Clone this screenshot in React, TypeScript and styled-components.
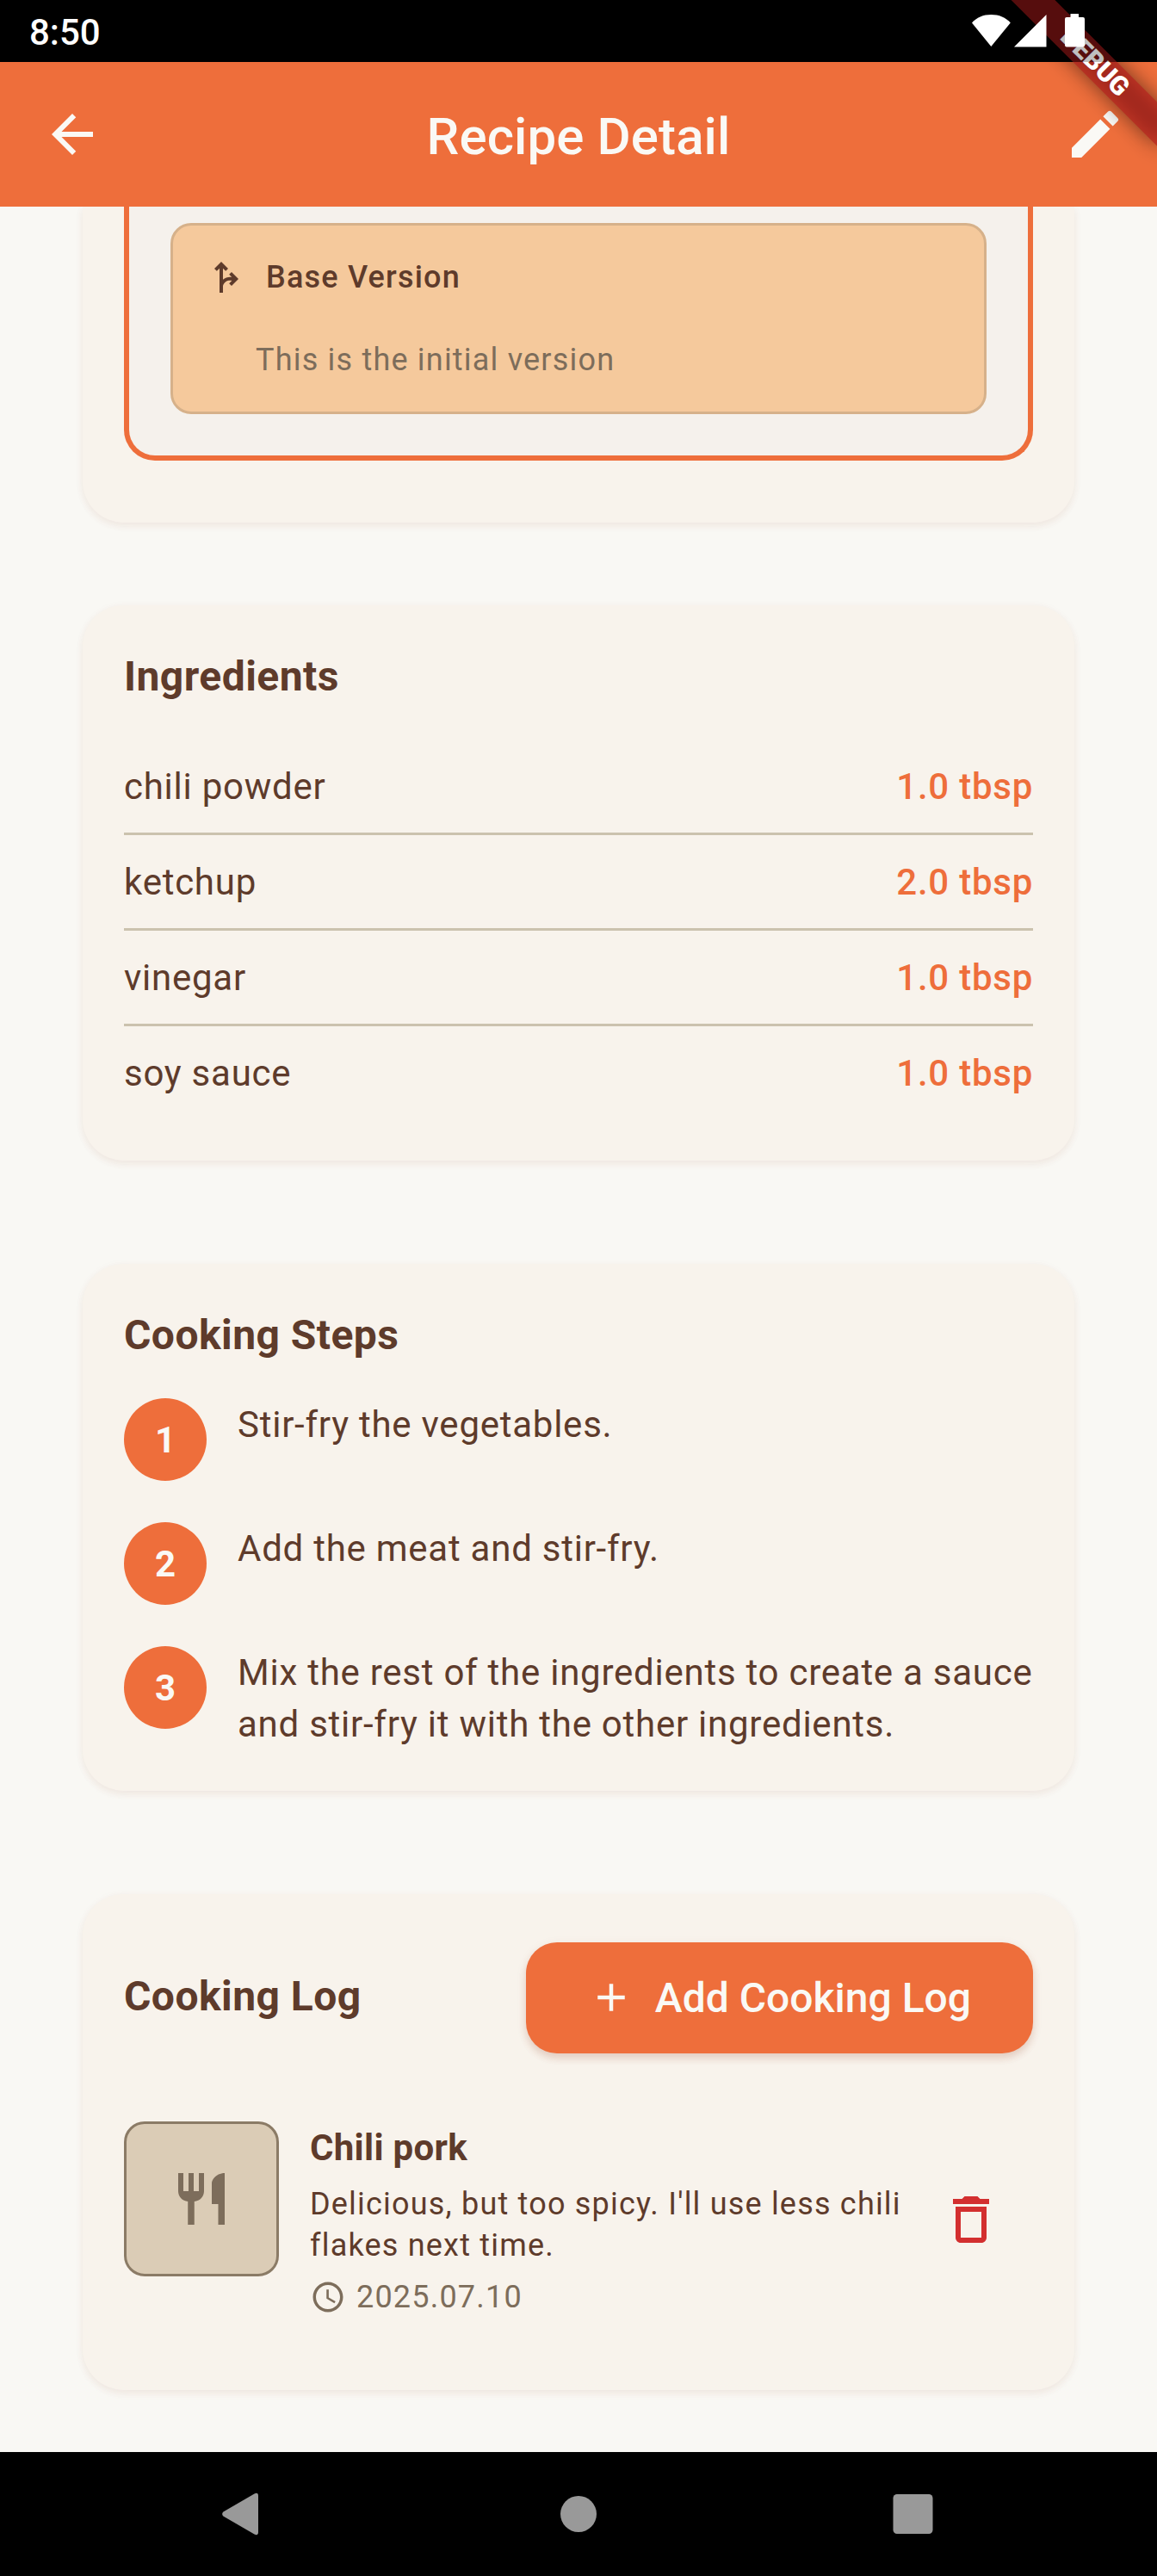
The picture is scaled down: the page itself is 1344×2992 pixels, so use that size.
import React from "react";
import styled, { createGlobalStyle } from "styled-components";
import {
  MdAccessTime,
  MdAdd,
  MdArrowBack,
  MdDeleteOutline,
  MdEdit,
  MdForkRight,
  MdRestaurant,
} from "react-icons/md";

const color = {
  primary: "#ee6e3b",
  onPrimary: "#faf9f5",
  page: "#f9f8f4",
  card: "#f8f3ec",
  panel: "#f5f1ec",
  version: "#f5c99c",
  versionBorder: "#d6b18a",
  text: "#5e3b2b",
  muted: "#7d6d5b",
  divider: "#cbc2ae",
  thumb: "#dbccb6",
  thumbBorder: "#8b7b66",
  danger: "#d32f2f",
};

const GlobalStyle = createGlobalStyle`
  *, *::before, *::after { box-sizing: border-box; }
  body { margin: 0; background: ${color.page}; }
  h1, h2, h3, p, ul, ol { margin: 0; padding: 0; font-weight: inherit; font-size: inherit; }
  ul, ol { list-style: none; }
  button { border: 0; padding: 0; background: none; font: inherit; color: inherit; }
  svg { display: block; flex: none; }
`;

const Screen = styled.div`
  position: relative;
  display: flex;
  flex-direction: column;
  width: 1344px;
  height: 2992px;
  overflow: hidden;
  background: ${color.page};
  color: ${color.text};
  font-family: Roboto, "Liberation Sans", sans-serif;
`;

const StatusBackdrop = styled.div`
  flex: none;
  height: 72px;
  background: #000;
`;

const StatusBar = styled.div`
  position: absolute;
  inset: 0 0 auto 0;
  z-index: 3;
  display: flex;
  justify-content: space-between;
  align-items: center;
  height: 72px;
  padding: 0 84px 0 34px;
  background: rgba(0, 0, 0, 0.25);
  color: #fff;
`;

const Clock = styled.span`
  font-size: 42px;
  line-height: 48px;
  font-weight: 500;
  padding-top: 3px;
`;

const StatusIcons = styled.div`
  display: flex;
  align-items: center;
`;

const AppBar = styled.header`
  flex: none;
  display: grid;
  grid-template-columns: 168px 1fr 168px;
  align-items: center;
  height: 168px;
  background: ${color.primary};
  color: ${color.onPrimary};
`;

const BarButton = styled.button<{ $end?: boolean }>`
  display: flex;
  align-items: center;
  justify-content: ${(p) => (p.$end ? "flex-end" : "flex-start")};
  height: 144px;
  padding: 0 ${(p) => (p.$end ? 36 : 48)}px;
  font-size: 72px;
`;

const BarTitle = styled.h1`
  padding-top: 6px;
  text-align: center;
  font-size: 60px;
  line-height: 84px;
  font-weight: 500;
  letter-spacing: 0.1px;
`;

const BannerArea = styled.div`
  position: absolute;
  top: 0;
  right: 0;
  z-index: 2;
  width: 300px;
  height: 300px;
  overflow: hidden;
  pointer-events: none;
`;

const bannerBox = `
  position: absolute;
  top: 54px;
  right: -48px;
  width: 240px;
  height: 36px;
  transform: rotate(45deg);
`;

const BannerShadow = styled.div`
  ${bannerBox}
  background: rgba(0, 0, 0, 0.5);
  filter: blur(12px);
`;

const BannerRibbon = styled.div`
  ${bannerBox}
  background: rgba(183, 28, 28, 0.627);
  color: #fff;
  font-size: 30.6px;
  line-height: 36px;
  font-weight: 900;
  text-align: center;
`;

const Content = styled.main`
  flex: 1;
  display: flex;
  flex-direction: column;
  padding: 0 96px;
  overflow: hidden;
`;

const Card = styled.section<{ $gap?: number; $continued?: boolean }>`
  flex: none;
  margin-top: ${(p) => p.$gap ?? 0}px;
  padding: ${(p) => (p.$continued ? 0 : 48)}px 48px 48px;
  border-radius: ${(p) => (p.$continued ? "0 0 48px 48px" : "48px")};
  background: ${color.card};
  box-shadow: 0 4px 9px rgba(150, 80, 60, 0.07), 0 2px 12px rgba(150, 80, 60, 0.04);
`;

const VersionPanel = styled.div`
  margin-bottom: 24px;
  padding: 19px 48px 48px;
  border: 6px solid ${color.primary};
  border-top: 0;
  border-radius: 0 0 36px 36px;
  background: ${color.panel};
`;

const VersionItem = styled.article`
  display: flex;
  flex-direction: column;
  gap: 48px;
  padding: 36px;
  border: 3px solid ${color.versionBorder};
  border-radius: 24px;
  background: ${color.version};
  font-size: 36px;
  line-height: 48px;
`;

const VersionName = styled.h3`
  display: flex;
  align-items: center;
  gap: 24px;
  font-weight: 500;
  letter-spacing: 1.2px;

  svg {
    font-size: 48px;
  }
`;

const VersionNote = styled.p`
  padding-left: 60px;
  letter-spacing: 1.2px;
  color: ${color.muted};
`;

const SectionTitle = styled.h2`
  font-size: 48px;
  line-height: 69px;
  font-weight: 700;
  letter-spacing: 0.45px;
`;

const IngredientList = styled.ul`
  margin-top: 39px;
`;

const Ingredient = styled.li`
  display: flex;
  justify-content: space-between;
  padding: 25px 0 23px;
  font-size: 42px;
  line-height: 60px;
  letter-spacing: 0.75px;

  & + & {
    border-top: 3px solid ${color.divider};
  }
`;

const Amount = styled.span`
  color: ${color.primary};
  font-weight: 500;
`;

const StepList = styled.ol`
  display: flex;
  flex-direction: column;
  gap: 48px;
  margin-top: 39px;
`;

const Step = styled.li`
  display: flex;
  align-items: flex-start;
  gap: 36px;
`;

const StepNumber = styled.span`
  flex: none;
  display: flex;
  align-items: center;
  justify-content: center;
  width: 96px;
  height: 96px;
  padding-top: 1px;
  border-radius: 50%;
  background: ${color.primary};
  color: ${color.onPrimary};
  font-size: 42px;
  line-height: 60px;
  font-weight: 700;
`;

const StepText = styled.p`
  flex: 1;
  margin: 1px -4px -1px 0;
  font-size: 42px;
  line-height: 60px;
  letter-spacing: 0.75px;
`;

const LogHeader = styled.div`
  display: flex;
  align-items: center;
  justify-content: space-between;
  height: 144px;

  ${SectionTitle} {
    margin-bottom: 3px;
  }
`;

const AddButton = styled.button`
  display: flex;
  align-items: center;
  gap: 24px;
  height: 129px;
  padding: 0 72px;
  border-radius: 36px;
  background: ${color.primary};
  color: ${color.onPrimary};
  font-size: 48px;
  font-weight: 500;
  box-shadow: 0 6px 8px rgba(160, 80, 50, 0.16), 0 3px 12px rgba(160, 80, 50, 0.1);

  svg {
    font-size: 54px;
  }
`;

const LogEntry = styled.article`
  display: flex;
  align-items: flex-start;
  gap: 36px;
  margin: 72px 0 36px;
`;

const Thumb = styled.div`
  flex: none;
  display: flex;
  align-items: center;
  justify-content: center;
  width: 180px;
  height: 180px;
  border: 3px solid ${color.thumbBorder};
  border-radius: 24px;
  background: ${color.thumb};
  color: ${color.muted};
  font-size: 72px;
`;

const LogBody = styled.div`
  flex: 1;
  display: flex;
  flex-direction: column;
  gap: 12px;
  margin-right: -36px;
  font-size: 36px;
  line-height: 48px;
  letter-spacing: 1.2px;
`;

const LogTitle = styled.h3`
  padding-top: 1px;
  font-size: 42px;
  line-height: 59px;
  font-weight: 700;
  letter-spacing: 0.3px;
`;

const LogDate = styled.p`
  display: flex;
  align-items: center;
  gap: 12px;
  color: ${color.muted};

  svg {
    font-size: 42px;
  }
`;

const DeleteButton = styled.button`
  align-self: center;
  display: flex;
  align-items: center;
  justify-content: center;
  width: 144px;
  height: 144px;
  color: ${color.danger};
  font-size: 72px;
`;

const NavBar = styled.nav`
  flex: none;
  display: grid;
  grid-template-columns: 84px 84px 84px;
  justify-content: center;
  align-items: center;
  column-gap: 306px;
  height: 144px;
  background: #000;
  color: #999;
`;

const NavButton = styled.button`
  display: flex;
  justify-content: center;
`;

const ingredients = [
  { name: "chili powder", amount: "1.0 tbsp" },
  { name: "ketchup", amount: "2.0 tbsp" },
  { name: "vinegar", amount: "1.0 tbsp" },
  { name: "soy sauce", amount: "1.0 tbsp" },
];

const steps = [
  "Stir-fry the vegetables.",
  "Add the meat and stir-fry.",
  "Mix the rest of the ingredients to create a sauce and stir-fry it with the other ingredients.",
];

function SystemIcons() {
  return (
    <StatusIcons>
      <svg width="132" height="40" viewBox="0 0 132 40" fill="#fff">
        <path d="M1 10.500C6.500 4.300 14 1 23.300 1s17 3.300 22.500 9.500L23.300 38z" />
        <path d="M87.500 1v37.500H50z" />
        <path d="M115.500 0h9.500v4h5a2 2 0 0 1 2 2v30.500a2 2 0 0 1-2 2h-19a2 2 0 0 1-2-2V6a2 2 0 0 1 2-2h4.500z" />
      </svg>
    </StatusIcons>
  );
}

export default function App() {
  return (
    <Screen>
      <GlobalStyle />
      <StatusBackdrop />
      <AppBar>
        <BarButton aria-label="Back">
          <MdArrowBack />
        </BarButton>
        <BarTitle>Recipe Detail</BarTitle>
        <BarButton $end aria-label="Edit">
          <MdEdit />
        </BarButton>
      </AppBar>

      <Content>
        <Card $continued>
          <VersionPanel>
            <VersionItem>
              <VersionName>
                <MdForkRight />
                Base Version
              </VersionName>
              <VersionNote>This is the initial version</VersionNote>
            </VersionItem>
          </VersionPanel>
        </Card>

        <Card $gap={96}>
          <SectionTitle>Ingredients</SectionTitle>
          <IngredientList>
            {ingredients.map((item) => (
              <Ingredient key={item.name}>
                <span>{item.name}</span>
                <Amount>{item.amount}</Amount>
              </Ingredient>
            ))}
          </IngredientList>
        </Card>

        <Card $gap={120}>
          <SectionTitle>Cooking Steps</SectionTitle>
          <StepList>
            {steps.map((step, index) => (
              <Step key={step}>
                <StepNumber>{index + 1}</StepNumber>
                <StepText>{step}</StepText>
              </Step>
            ))}
          </StepList>
        </Card>

        <Card $gap={120}>
          <LogHeader>
            <SectionTitle>Cooking Log</SectionTitle>
            <AddButton>
              <MdAdd />
              Add Cooking Log
            </AddButton>
          </LogHeader>
          <LogEntry>
            <Thumb>
              <MdRestaurant />
            </Thumb>
            <LogBody>
              <LogTitle>Chili pork</LogTitle>
              <p>Delicious, but too spicy. I'll use less chili flakes next time.</p>
              <LogDate>
                <MdAccessTime />
                2025.07.10
              </LogDate>
            </LogBody>
            <DeleteButton aria-label="Delete log">
              <MdDeleteOutline />
            </DeleteButton>
          </LogEntry>
        </Card>
      </Content>

      <NavBar>
        <NavButton aria-label="System back">
          <svg width="48" height="50" viewBox="0 0 48 50" fill="currentColor">
            <path d="M1.300 22.500 37.500 1.400Q42 -0.500 42 4V46Q42 50.500 37.500 48.600L1.300 27.500Q-1 25 1.300 22.500z" />
          </svg>
        </NavButton>
        <NavButton aria-label="Home">
          <svg width="42" height="42" viewBox="0 0 42 42" fill="currentColor">
            <circle cx="21" cy="21" r="21" />
          </svg>
        </NavButton>
        <NavButton aria-label="Overview">
          <svg width="50" height="46" viewBox="0 0 50 46" fill="currentColor">
            <rect x="0.500" width="46" height="46" rx="4.500" />
          </svg>
        </NavButton>
      </NavBar>

      <BannerArea>
        <BannerShadow />
        <BannerRibbon>DEBUG</BannerRibbon>
      </BannerArea>
      <StatusBar>
        <Clock>8:50</Clock>
        <SystemIcons />
      </StatusBar>
    </Screen>
  );
}
